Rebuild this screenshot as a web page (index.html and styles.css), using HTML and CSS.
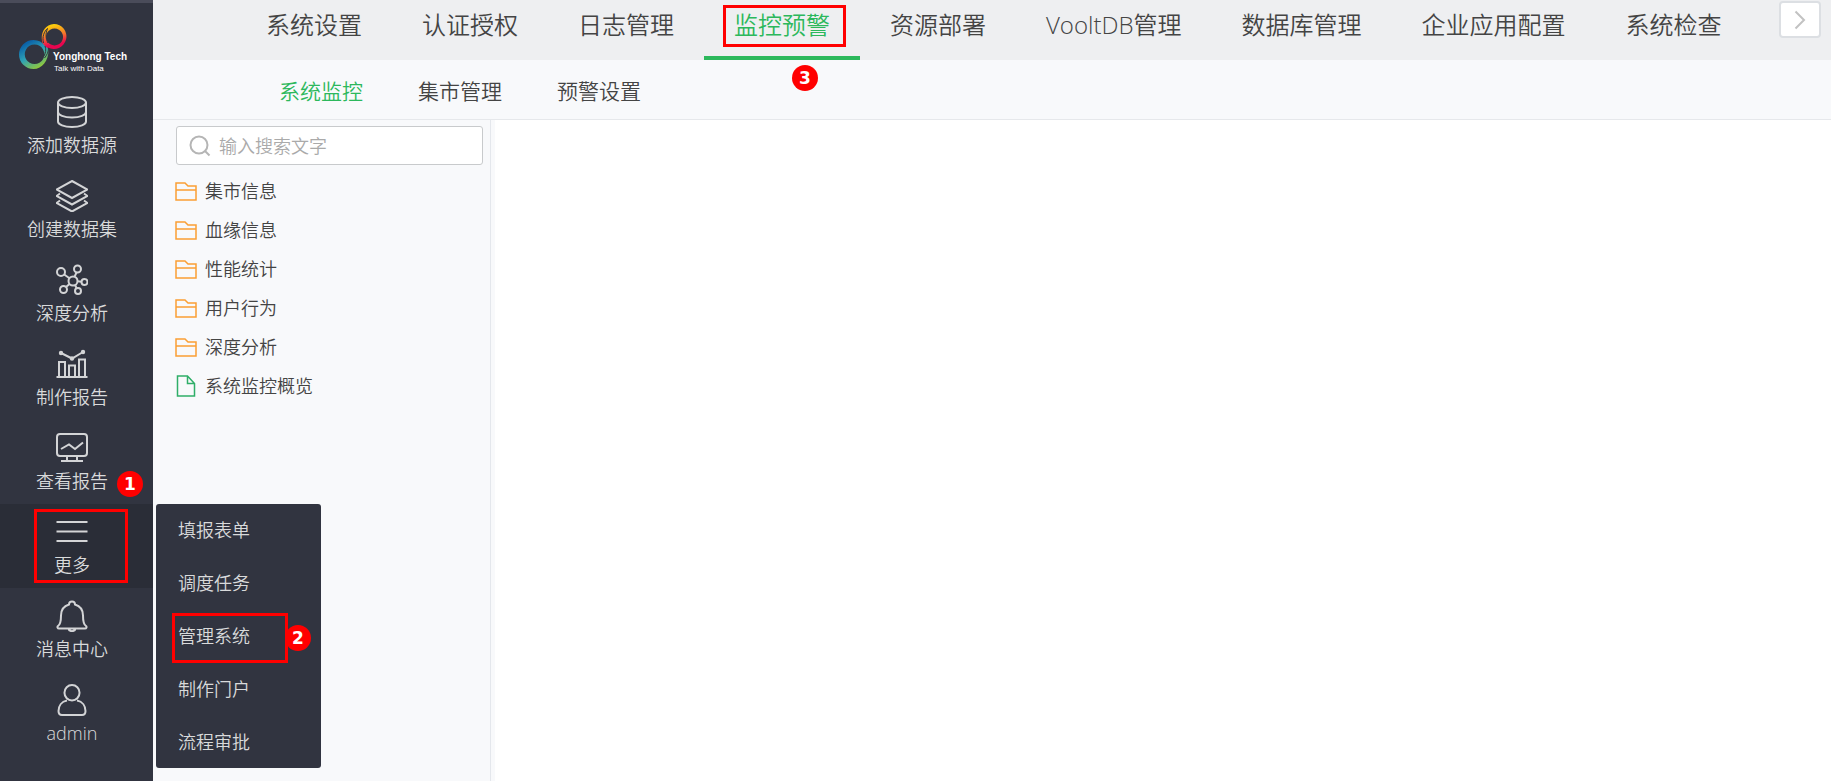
FILE: index.html
```html
<!DOCTYPE html>
<html lang="zh-CN">
<head>
<meta charset="utf-8">
<title>监控预警</title>
<link rel="stylesheet" href="styles.css">
</head>
<body>
<div class="app">
  <aside class="sidebar">
    <div class="brand">
      <svg class="brand-mark" viewBox="0 0 50 50" width="50" height="50" aria-hidden="true">
        <defs>
          <linearGradient id="warm" x1="0" y1="0" x2="0.2" y2="1">
            <stop offset="0.1" stop-color="#fbd20a"/><stop offset="0.5" stop-color="#f47a2a"/><stop offset="0.85" stop-color="#e8054f"/>
          </linearGradient>
          <linearGradient id="cool" x1="0.2" y1="0" x2="0.8" y2="1">
            <stop offset="0.1" stop-color="#0b62a8"/><stop offset="0.5" stop-color="#2fa3b5"/><stop offset="0.9" stop-color="#8dc63f"/>
          </linearGradient>
        </defs>
        <path fill="url(#warm)" fill-rule="evenodd" d="M36 4a12.500 12.500 0 1 1-6 23.500l-2 3C21 22 22 5 36 4zM36.500 8.500a8.500 8.500 0 1 0 .1 0z"/>
        <path d="M25.500 23c-1.500-6 .5-11.500 4-14.500-2 5-2 10 .500 14.500" fill="none" stroke="#313440" stroke-width="1"/>
        <path fill="url(#cool)" fill-rule="evenodd" d="M15.500 20c5 0 9 2 11.500 6l3.500 3c.5 11-6 20-15 20a14.500 14.500 0 1 1 0-29zM16.500 24.500a9.800 9.800 0 1 0 .1 0z"/>
        <path d="M27 26c1.500 4 .5 7-1 10M30.500 28c0 4-1.500 7-4 10" fill="none" stroke="#313440" stroke-width="1"/>
      </svg>
      <div class="brand-text"><strong class="brand-name">Yonghong Tech</strong><span class="brand-slogan">Talk with Data</span></div>
    </div>
    <nav class="side-nav">
      <a class="side-item" href="#"><svg class="side-icon" viewBox="0 0 32 32" aria-hidden="true"><ellipse cx="16" cy="6.500" rx="14" ry="5.500"/><path d="M2 6.500v19c0 3 6 5.500 14 5.500s14-2.500 14-5.500v-19M2 16c0 3 6 5.500 14 5.500S30 19 30 16"/></svg><span>添加数据源</span></a>
      <a class="side-item" href="#"><svg class="side-icon" viewBox="0 0 32 32" aria-hidden="true"><path d="M16 1l15.500 8.500L16 18 .5 9.500zM4 13.500L.5 16 16 24.500 31.500 16 28 13.500M4 20.500L.5 23 16 31.500 31.500 23 28 20.500"/></svg><span>创建数据集</span></a>
      <a class="side-item" href="#"><svg class="side-icon" viewBox="0 0 32 32" aria-hidden="true"><circle cx="17" cy="17" r="4.500"/><circle cx="5" cy="8" r="4"/><circle cx="21.500" cy="5" r="3.500"/><circle cx="28.500" cy="18" r="3"/><circle cx="7.500" cy="25.500" r="3.500"/><circle cx="22" cy="27" r="3"/><path d="M8.200 10.500l5.300 3.800M20.500 8.500l-2 4.300M21.500 17.300l4 .4M13.500 20l-3.500 3M19 21l1.700 3.300"/></svg><span>深度分析</span></a>
      <a class="side-item" href="#"><svg class="side-icon" viewBox="0 0 32 32" aria-hidden="true"><path d="M.5 29h31M3 29V14h6v15M13 29V17.500h6V29M23 29V11.500h6V29M5 5l11 5.500L27 4"/><g class="dot"><circle cx="5" cy="5" r="2.200"/><circle cx="16" cy="10.500" r="2.200"/><circle cx="27" cy="4" r="2.200"/></g></svg><span>制作报告</span></a>
      <a class="side-item" href="#"><svg class="side-icon" viewBox="0 0 32 32" aria-hidden="true"><rect x="1" y="2" width="30" height="22" rx="3"/><path d="M5 17l8-4.500 6 4.500 8-6.500M11 24v5M21 24v5M5 29h22"/></svg><span>查看报告</span><b class="step step-view">1</b></a>
      <div class="side-group">
        <a class="side-item active" href="#"><svg class="side-icon" viewBox="0 0 32 32" aria-hidden="true"><path d="M.5 6h31M.5 15.500h31M.5 25h31"/></svg><span>更多</span><i class="mark mark-more"></i></a>
        <div class="flyout">
          <a class="flyout-item" href="#">填报表单</a>
          <a class="flyout-item" href="#">调度任务</a>
          <a class="flyout-item" href="#">管理系统<i class="mark mark-system"></i><b class="step step-system">2</b></a>
          <a class="flyout-item" href="#">制作门户</a>
          <a class="flyout-item" href="#">流程审批</a>
        </div>
      </div>
      <a class="side-item" href="#"><svg class="side-icon" viewBox="0 0 32 32" aria-hidden="true"><path d="M13 4.500C13 .5 19 .5 19 4.500c5 1.500 8 5.500 8 11 0 6 .5 9 3 10.500 1 1 .5 2.500-1 2.500H3c-1.500 0-2-1.500-1-2.500C4.500 24.500 5 21.500 5 15.500c0-5.500 3-9.500 8-11zM12.500 28.500c.5 3.500 6.500 3.500 7 0"/></svg><span>消息中心</span></a>
      <a class="side-item" href="#"><svg class="side-icon" viewBox="0 0 32 32" aria-hidden="true"><rect x="8.500" y="1" width="15" height="15.500" rx="7.500"/><path d="M11 16.500C5.500 17.500 2.500 22 2.500 27c0 3 1 4 3.500 4h20c2.500 0 3.500-1 3.500-4 0-5-3-9.500-8.500-10.500"/></svg><span>admin</span></a>
    </nav>
  </aside>
  <div class="page">
    <header class="topbar">
      <nav class="tabs">
        <a class="tab" href="#">系统设置</a>
        <a class="tab" href="#">认证授权</a>
        <a class="tab" href="#">日志管理</a>
        <a class="tab active" href="#">监控预警<i class="mark mark-tab"></i><b class="step step-tab">3</b></a>
        <a class="tab" href="#">资源部署</a>
        <a class="tab" href="#">VooltDB管理</a>
        <a class="tab" href="#">数据库管理</a>
        <a class="tab" href="#">企业应用配置</a>
        <a class="tab" href="#">系统检查</a>
      </nav>
      <button class="scroll-next" type="button" aria-label="更多标签"><svg viewBox="0 0 12 20" width="12" height="20" aria-hidden="true"><path d="M1.500 1.500L10 10l-8.500 8.500"/></svg></button>
    </header>
    <nav class="subtabs">
      <a class="subtab active" href="#">系统监控</a>
      <a class="subtab" href="#">集市管理</a>
      <a class="subtab" href="#">预警设置</a>
    </nav>
    <div class="body">
      <section class="tree-panel">
        <label class="search"><svg viewBox="0 0 22 22" width="22" height="22" aria-hidden="true"><circle cx="10" cy="10" r="8.500"/><path d="M16 16l4.500 4.500"/></svg><input type="text" placeholder="输入搜索文字" aria-label="输入搜索文字"></label>
        <ul class="tree">
          <li class="tree-row"><svg class="folder" viewBox="0 0 22 22" aria-hidden="true"><path d="M1 20V3h9l3 3h8v14zM1 10h20"/></svg><a href="#">集市信息</a></li>
          <li class="tree-row"><svg class="folder" viewBox="0 0 22 22" aria-hidden="true"><path d="M1 20V3h9l3 3h8v14zM1 10h20"/></svg><a href="#">血缘信息</a></li>
          <li class="tree-row"><svg class="folder" viewBox="0 0 22 22" aria-hidden="true"><path d="M1 20V3h9l3 3h8v14zM1 10h20"/></svg><a href="#">性能统计</a></li>
          <li class="tree-row"><svg class="folder" viewBox="0 0 22 22" aria-hidden="true"><path d="M1 20V3h9l3 3h8v14zM1 10h20"/></svg><a href="#">用户行为</a></li>
          <li class="tree-row"><svg class="folder" viewBox="0 0 22 22" aria-hidden="true"><path d="M1 20V3h9l3 3h8v14zM1 10h20"/></svg><a href="#">深度分析</a></li>
          <li class="tree-row"><svg class="file" viewBox="0 0 22 22" aria-hidden="true"><path d="M2.500 21V1h10l7 7.500V21zM12.500 1v7.500h7"/></svg><a href="#">系统监控概览</a></li>
        </ul>
      </section>
      <main class="content"></main>
    </div>
  </div>
</div>
</body>
</html>
```
FILE: styles.css
```css
* { box-sizing: border-box; }

body {
  margin: 0;
  background: #fff;
  color: #444;
  font: 18px/24px "Open Sans", "Noto Sans CJK SC", sans-serif;
  font-weight: 350;
}

a { color: inherit; text-decoration: none; }

.app { display: flex; min-height: 100vh; }

.sidebar {
  flex: none;
  width: 153px;
  border-top: 3px solid #4a4c5a;
  background: #313440;
  color: #d9dadb;
}

.brand {
  display: flex;
  height: 81px;
  padding: 17px 0 0 18px;
}
.brand-mark { flex: none; }
.brand-text {
  display: flex;
  flex-direction: column;
  margin-left: -15px;
  padding-top: 31px;
  color: #fff;
  font-family: "Liberation Sans", sans-serif;
  white-space: nowrap;
}
.brand-name { font-size: 10px; line-height: 12px; }
.brand-slogan { padding-left: 1px; font-size: 8px; line-height: 11px; }

.side-item {
  position: relative;
  display: flex;
  flex-direction: column;
  align-items: center;
  gap: 5px;
  height: 84px;
  padding: 12px 9px 0 0;
}
.side-item.active { background: #2a2d37; }
.side-icon {
  width: 32px;
  height: 32px;
  fill: none;
  stroke: #d3d4d6;
  stroke-width: 2;
}
.side-icon .dot { fill: #d3d4d6; stroke: none; }
.side-group { position: relative; }

.flyout {
  position: absolute;
  z-index: 2;
  top: 0;
  left: 156px;
  display: flex;
  flex-direction: column;
  gap: 2px;
  width: 165px;
  padding: 1px 0 0;
  border-radius: 3px;
  background: #313440;
}
.flyout-item {
  position: relative;
  padding: 0 22px;
  line-height: 51px;
}

.mark {
  position: absolute;
  border: 3px solid #f00;
}
.mark-more { top: 5px; left: 34px; width: 94px; height: 74px; }
.mark-system { top: 2px; left: 16px; width: 116px; height: 50px; }
.mark-tab { top: 5px; left: 19px; width: 123px; height: 42px; }

.step {
  position: absolute;
  width: 26px;
  height: 26px;
  border-radius: 50%;
  background: #f00;
  color: #fff;
  font: bold 17px/26px "DejaVu Sans", sans-serif;
  text-align: center;
}
.step-view { top: 51px; left: 117px; }
.step-system { top: 14px; left: 129px; }
.step-tab { top: 65px; left: 88px; }

.page {
  display: flex;
  flex: 1;
  flex-direction: column;
  min-width: 0;
}

.topbar {
  display: flex;
  justify-content: space-between;
  height: 60px;
  padding: 0 10px 0 83px;
  background: #eeeff1;
}
.tabs { display: flex; }
.tab {
  position: relative;
  height: 60px;
  padding: 0 30px;
  font-size: 24px;
  line-height: 50px;
  white-space: nowrap;
}
.tab.active {
  border-bottom: 4px solid #2cb85c;
  color: #2cb85c;
}
.scroll-next {
  display: grid;
  place-items: center;
  width: 42px;
  height: 37px;
  margin-top: 1px;
  padding: 0;
  border: 2px solid #dcdfe3;
  border-radius: 4px;
  background: #fff;
}
.scroll-next svg { fill: none; stroke: #c2c2c2; stroke-width: 2; }

.subtabs {
  display: flex;
  gap: 55px;
  height: 60px;
  padding-left: 126px;
  border-bottom: 1px solid #e6e8eb;
  background: #f8f9fb;
  font-size: 21px;
  line-height: 62px;
}
.subtab.active { color: #2cb85c; }

.body { display: flex; flex: 1; }
.tree-panel {
  width: 342px;
  padding: 6px 11px 0 22px;
  border-right: 4px solid #f8f9fb;
  background: #f8f9fb;
  box-shadow: inset -1px 0 #e4e7ec;
}
.search {
  display: flex;
  align-items: center;
  gap: 8px;
  height: 39px;
  margin-left: 1px;
  margin-right: -3px;
  padding: 0 12px;
  border: 1px solid #c8cacc;
  border-radius: 3px;
  background: #fff;
}
.search svg { flex: none; fill: none; stroke: #b5b5b5; stroke-width: 2; }
.search input {
  flex: 1;
  min-width: 0;
  padding: 0;
  border: 0;
  outline: 0;
  background: none;
  color: inherit;
  font: inherit;
}
.search input::placeholder { color: #aaa; opacity: 1; }

.tree { margin: 6px 0 0; padding: 0; list-style: none; }
.tree-row {
  display: flex;
  align-items: center;
  gap: 8px;
  height: 39px;
}
.tree-row svg { width: 22px; height: 22px; fill: none; stroke-width: 1.500; }
.folder { stroke: #fa9f35; }
.file { stroke: #2fae68; }

.content { flex: 1; background: #fff; }
```
